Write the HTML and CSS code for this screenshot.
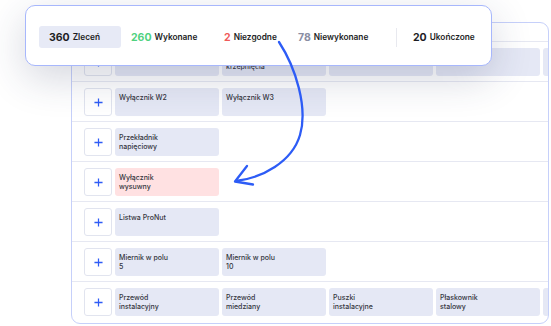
FILE: index.html
```html
<!DOCTYPE html>
<html lang="pl">
<head>
  <meta charset="UTF-8" />
  <title>Zlecenia</title>
  <link rel="stylesheet" href="styles.css">
</head>
<body>
  <div class="stage">
    <div class="board">
      <div class="board-head"></div>

      <div class="row">
        <a class="add" href="#"><svg viewBox="0 0 10 10"><path d="M5 0.5V9.5M0.5 5H9.5"/></svg></a>
        <div class="cell"></div>
        <div class="cell">Elementy<br>krzepnięcia</div>
        <div class="cell"></div>
        <div class="cell"></div>
        <div class="cell"></div>
      </div>

      <div class="row">
        <a class="add" href="#"><svg viewBox="0 0 10 10"><path d="M5 0.5V9.5M0.5 5H9.5"/></svg></a>
        <div class="cell">Wyłącznik W2</div>
        <div class="cell">Wyłącznik W3</div>
      </div>

      <div class="row">
        <a class="add" href="#"><svg viewBox="0 0 10 10"><path d="M5 0.5V9.5M0.5 5H9.5"/></svg></a>
        <div class="cell">Przekładnik<br>napięciowy</div>
      </div>

      <div class="row">
        <a class="add" href="#"><svg viewBox="0 0 10 10"><path d="M5 0.5V9.5M0.5 5H9.5"/></svg></a>
        <div class="cell cell-bad">Wyłącznik<br>wysuwny</div>
      </div>

      <div class="row">
        <a class="add" href="#"><svg viewBox="0 0 10 10"><path d="M5 0.5V9.5M0.5 5H9.5"/></svg></a>
        <div class="cell">Listwa ProNut</div>
      </div>

      <div class="row">
        <a class="add" href="#"><svg viewBox="0 0 10 10"><path d="M5 0.5V9.5M0.5 5H9.5"/></svg></a>
        <div class="cell">Miernik w polu<br>5</div>
        <div class="cell">Miernik w polu<br>10</div>
      </div>

      <div class="row">
        <a class="add" href="#"><svg viewBox="0 0 10 10"><path d="M5 0.5V9.5M0.5 5H9.5"/></svg></a>
        <div class="cell">Przewód<br>instalacyjny</div>
        <div class="cell">Przewód<br>miedziany</div>
        <div class="cell">Puszki<br>instalacyjne</div>
        <div class="cell">Płaskownik<br>stalowy</div>
        <div class="cell"></div>
      </div>
    </div>

    <div class="stats">
      <div class="stat stat-all"><b>360</b> Zleceń</div>
      <div class="stat stat-done"><b>260</b> Wykonane</div>
      <div class="stat stat-bad"><b>2</b> Niezgodne</div>
      <div class="stat stat-todo"><b>78</b> Niewykonane</div>
      <div class="sep"></div>
      <div class="stat stat-end"><b>20</b> Ukończone</div>
    </div>

    <svg class="arrow" viewBox="0 0 551 326">
      <path d="M279 42 C296 68 308 108 300 135 C292 162 262 178 236 181"/>
      <path d="M247 166 L235 181.5 L253 184.5"/>
    </svg>
  </div>
</body>
</html>
```

FILE: styles.css
```css
html, body {
  padding: 0;
  margin: 0;
}
body {
  background: #fff;
  font-family: Inter, "Open Sans", sans-serif;
  color: #1c1d24;
}
a {
  color: inherit;
  text-decoration: none;
}

.stage {
  position: relative;
  width: 551px;
  height: 326px;
  overflow: hidden;
}

/* board with rows */
.board {
  margin: 22px 0 0 71px;
  width: 478px;
  height: 302px;
  box-sizing: border-box;
  border: 1.5px solid #c6d0fa;
  border-radius: 9px;
  overflow: hidden;
  background: #fff;
}
.board-head {
  height: 18px;
  border-bottom: 1px solid #e6e8f2;
}
.row {
  display: flex;
  gap: 3px;
  height: 40px;
  box-sizing: border-box;
  padding: 6px 0 0 12px;
  border-bottom: 1px solid #e6e8f2;
}
.row:last-child {
  border-bottom: none;
}
.add {
  flex: none;
  width: 28px;
  height: 28px;
  box-sizing: border-box;
  border: 1px solid #e1e4ef;
  border-radius: 3px;
  background: #fff;
  display: flex;
  align-items: center;
  justify-content: center;
}
.add svg {
  width: 9px;
  height: 9px;
}
.add path {
  stroke: #2f5cf6;
  stroke-width: 1.4;
  fill: none;
}
.cell {
  flex: none;
  width: 104px;
  height: 28px;
  box-sizing: border-box;
  padding: 5px 4px 0;
  border-radius: 3px;
  background: #e5e8f5;
  font-size: 7px;
  line-height: 9px;
  font-weight: 500;
  color: #34353d;
}
.cell-bad {
  background: #ffe1e2;
}

/* stats panel */
.stats {
  position: absolute;
  left: 25px;
  top: 5px;
  width: 467px;
  height: 61px;
  box-sizing: border-box;
  padding: 3px 0 0 13px;
  display: flex;
  align-items: center;
  background: #fff;
  border: 1.5px solid #a7b7fc;
  border-radius: 10px;
  box-shadow: 0 12px 40px rgba(40, 48, 90, 0.2);
  z-index: 2;
}
.stat {
  flex: none;
  box-sizing: border-box;
  height: 22px;
  padding: 0 10px;
  display: flex;
  align-items: center;
  gap: 3px;
  font-size: 8.3px;
  font-weight: 600;
  white-space: nowrap;
}
.stat b {
  font-size: 10.5px;
  font-weight: 700;
}
.stat-all {
  width: 82px;
  background: #e7eaf6;
  border-radius: 3px;
}
.stat-done { width: 93px; }
.stat-done b { color: #4fd27f; }
.stat-bad { width: 74px; }
.stat-bad b { color: #f05a5a; }
.stat-todo { width: 98px; }
.stat-todo b { color: #8a8ea3; }
.stat-end { padding-left: 16px; }
.sep {
  flex: none;
  width: 1px;
  height: 19px;
  margin-left: 10px;
  background: #e8e9ef;
}

.arrow {
  position: absolute;
  left: 0;
  top: 0;
  width: 551px;
  height: 326px;
  z-index: 3;
  pointer-events: none;
}
.arrow path {
  fill: none;
  stroke: #2d5cf6;
  stroke-width: 2.3;
  stroke-linecap: round;
  stroke-linejoin: round;
}
```
